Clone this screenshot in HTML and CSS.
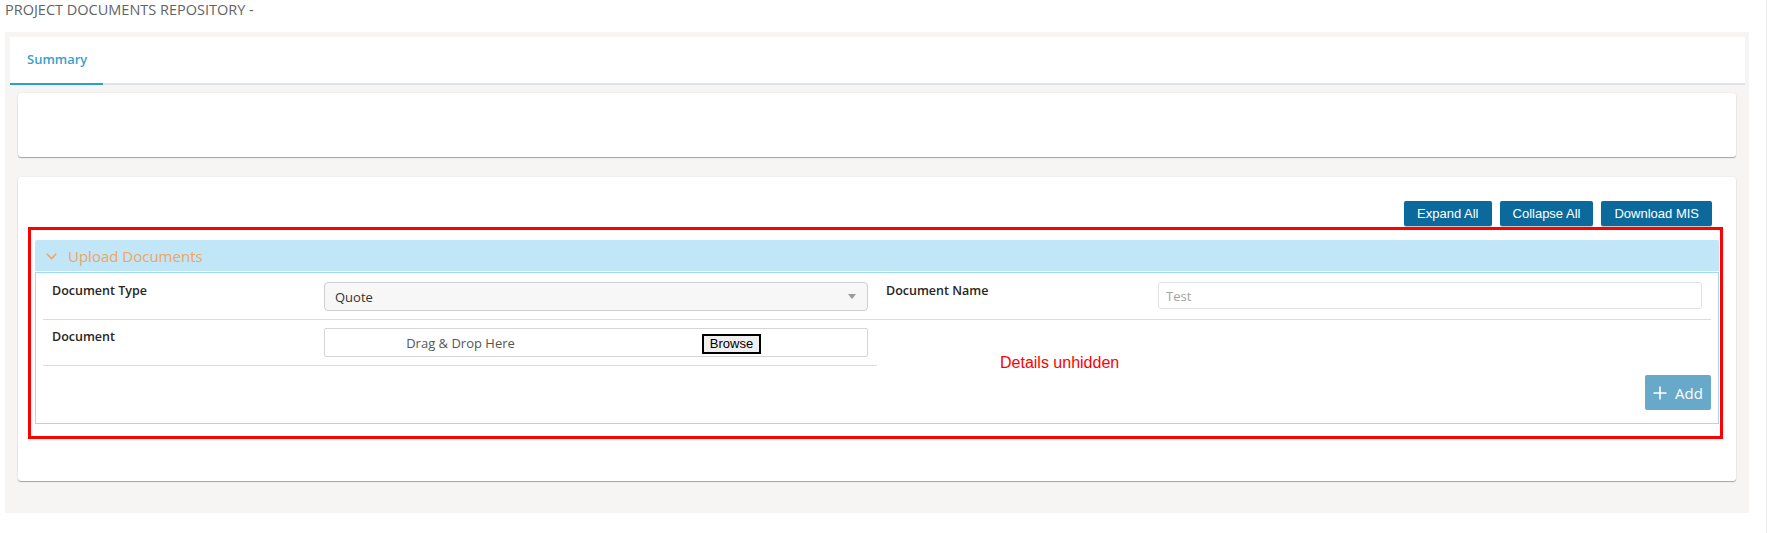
FILE: index.html
```html
<!DOCTYPE html>
<html lang="en">
<head>
<meta charset="utf-8">
<title>Project Documents Repository</title>
<link rel="stylesheet" href="styles.css">
</head>
<body>
<div class="page">
  <div class="main">
    <h1 class="page-title">PROJECT DOCUMENTS REPOSITORY -</h1>
    <div class="workspace">
      <div class="tabs">
        <div class="tab active">Summary</div>
      </div>
      <div class="tab-content">
        <div class="card card-summary"></div>
        <div class="card card-docs">
          <div class="toolbar">
            <button class="tb-btn">Expand All</button>
            <button class="tb-btn">Collapse All</button>
            <button class="tb-btn">Download MIS</button>
          </div>
          <div class="accordion">
            <div class="acc-header">
              <svg class="chevron" width="11" height="7" viewBox="0 0 11 7"><polyline points="0.8,0.8 5.5,5.6 10.2,0.8" fill="none" stroke="#f4a460" stroke-width="1.5"/></svg>
              <span>Upload Documents</span>
            </div>
            <div class="acc-body">
              <div class="form-grid">
                <div class="field">
                  <div class="field-label">Document Type</div>
                  <div class="select"><span>Quote</span><span class="select-caret"></span></div>
                </div>
                <div class="field">
                  <div class="field-label">Document Name</div>
                  <div class="text-input">Test</div>
                </div>
                <div class="field">
                  <div class="field-label">Document</div>
                  <div class="dropzone">
                    <div class="dz-half"><span class="dz-text">Drag &amp; Drop Here</span></div>
                    <div class="dz-half"><button class="browse">Browse</button></div>
                  </div>
                </div>
                <div class="field field-empty"></div>
              </div>
              <div class="actions">
                <button class="btn-add">
                  <svg width="14" height="14" viewBox="0 0 14 14"><path d="M7 0.5V13.5M0.5 7H13.5" stroke="#fff" stroke-width="1.6" fill="none"/></svg>
                  <span>Add</span>
                </button>
              </div>
            </div>
          </div>
          <div class="annot-box"></div>
          <div class="annot-text">Details unhidden</div>
        </div>
      </div>
    </div>
  </div>
  <div class="side-strip"></div>
</div>
</body>
</html>
```
FILE: styles.css
```css
* { box-sizing: border-box; }

body {
  margin: 0;
  font-family: "Open Sans", "Noto Sans", sans-serif;
  color: #333;
  background: #fff;
}

.page {
  display: flex;
  height: 533px;
  overflow: hidden;
}

.main {
  width: 1766px;
  flex: none;
}

.side-strip {
  flex: 1;
  border-left: 1px solid #ececec;
}

.page-title {
  margin: 0;
  height: 32px;
  padding: 0 0 0 5px;
  font-size: 14.5px;
  line-height: 19px;
  font-weight: 400;
  color: #5f6368;
}

.workspace {
  margin-left: 5px;
  width: 1744px;
  background: #f6f5f3;
  padding: 5px 4px 32px 5px;
}

.tabs {
  display: flex;
  background: #fff;
  height: 48px;
  border-bottom: 2px solid #dee2e6;
}

.tab {
  height: 48px;
  margin-bottom: -2px;
  padding: 13px 16px 0 17px;
  border-bottom: 2px solid #2b9fce;
  font-size: 13px;
  line-height: 18px;
  font-weight: 600;
  color: #3a9fcb;
}

.tab-content {
  padding: 8px 9px 0 8px;
}

.card {
  background: #fff;
  border-radius: 3px;
  box-shadow: 0 1px 1px rgba(0, 0, 0, 0.32), 0 0 2px rgba(0, 0, 0, 0.08);
}

.card-summary {
  height: 64px;
}

.card-docs {
  position: relative;
  margin-top: 20px;
  height: 304px;
  padding: 24px 17px 0 17px;
}

.toolbar {
  display: flex;
  justify-content: flex-end;
  gap: 8px;
  padding-right: 7px;
}

.tb-btn {
  height: 25px;
  padding: 0 13px;
  border: 0;
  border-radius: 2px;
  background: #0b6a9b;
  color: #fff;
  font-family: "Liberation Sans", Arial, sans-serif;
  font-size: 13px;
  line-height: 25px;
  box-shadow: 0 1px 1px rgba(0, 0, 0, 0.25);
}

.accordion {
  margin-top: 14px;
}

.acc-header {
  height: 31px;
  display: flex;
  align-items: center;
  gap: 11px;
  padding-left: 11px;
  background: #c0e6f7;
  color: #f4a460;
  font-size: 15px;
  line-height: 22px;
  border-radius: 2px 2px 0 0;
}

.chevron {
  flex: none;
  margin-top: 1px;
}

.acc-body {
  margin-top: 1px;
  border: 1px solid #9cdcf5;
  padding: 1px 7px 13px;
}

.form-grid {
  display: grid;
  grid-template-columns: 1fr 1fr;
}

.field {
  display: grid;
  grid-template-columns: 272px 1fr;
  align-items: start;
  height: 46px;
  padding: 8px 9px 0;
  border-bottom: 1px solid #dcdcdc;
}

.field-empty {
  border-bottom: 0;
}

.field-label {
  font-size: 12.5px;
  line-height: 18px;
  font-weight: 600;
  color: #262626;
}

.select {
  height: 29px;
  display: flex;
  align-items: center;
  justify-content: space-between;
  padding: 0 11px 0 10px;
  border: 1px solid #cfcfcf;
  border-radius: 4px;
  background: #f7f7f7;
  font-size: 13px;
  color: #333;
}

.select-caret {
  width: 0;
  height: 0;
  border-left: 4px solid transparent;
  border-right: 4px solid transparent;
  border-top: 5px solid #9a9a9a;
}

.text-input {
  height: 27px;
  display: flex;
  align-items: center;
  padding: 0 7px;
  border: 1px solid #dfe2e7;
  border-radius: 3px;
  font-size: 13px;
  color: #a3a3a3;
}

.dropzone {
  height: 29px;
  display: flex;
  border: 1px solid #d3d6db;
  border-radius: 2px;
}

.dz-half {
  flex: 1;
  display: flex;
  align-items: center;
  justify-content: center;
}

.dz-text {
  font-size: 13px;
  color: #555;
}

.browse {
  height: 20px;
  padding: 0 6px;
  border: 2px solid #000;
  background: #efefef;
  color: #000;
  font-family: "Liberation Sans", Arial, sans-serif;
  font-size: 13px;
  line-height: 16px;
  margin-top: 2px;
}

.actions {
  display: flex;
  justify-content: flex-end;
  margin-top: 9px;
}

.btn-add {
  width: 66px;
  height: 35px;
  display: flex;
  align-items: center;
  gap: 8px;
  padding: 0 0 0 8px;
  border: 0;
  border-radius: 2px;
  background: #68a8c8;
  color: #fff;
  font-family: "Open Sans", sans-serif;
  font-size: 15px;
}

.annot-box {
  position: absolute;
  left: 10px;
  top: 50px;
  width: 1695px;
  height: 212px;
  border: 3px solid #ff0000;
  pointer-events: none;
}

.annot-text {
  position: absolute;
  left: 982px;
  top: 177px;
  font-family: "Liberation Sans", Arial, sans-serif;
  font-size: 16px;
  line-height: 18px;
  color: #ff0000;
}
```
